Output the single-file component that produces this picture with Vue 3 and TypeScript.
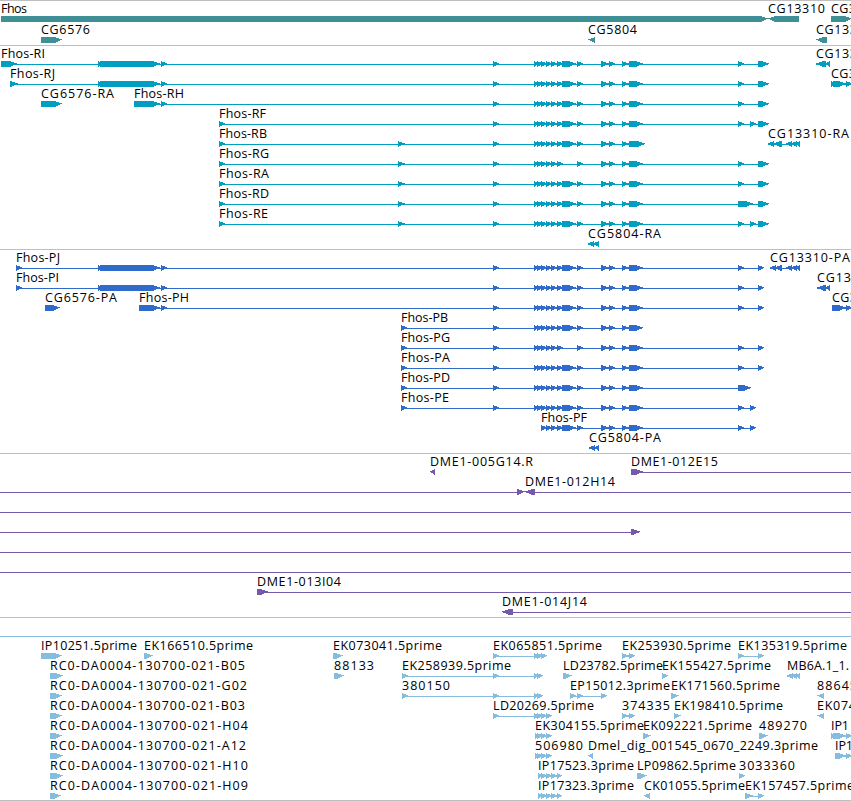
<template>
  <main class="browser">
    <section v-for="track in tracks" :key="track.name" class="track" :class="`track-${track.name}`">
      <svg
        v-for="(row, rowIndex) in track.rows"
        :key="rowIndex"
        class="track-row"
        :viewBox="`0 0 ${VIEW_WIDTH} ${track.rowHeight}`"
        :width="VIEW_WIDTH"
        :height="track.rowHeight"
      >
        <g v-for="(feature, featureIndex) in row" :key="featureIndex">
          <rect
            v-if="feature.line"
            class="feature-line"
            :x="feature.line[0]"
            :y="LINE_Y"
            :width="feature.line[1] - feature.line[0]"
            height="1"
          />
          <polygon
            v-for="(exon, exonIndex) in feature.exons"
            :key="exonIndex"
            class="feature-exon"
            :points="exonPoints(exon, feature.reverse)"
          />
          <text
            v-if="feature.label"
            class="feature-label"
            :x="feature.x"
            :y="BASELINE_Y"
            :textLength="feature.labelWidth"
          >{{ feature.label }}</text>
        </g>
      </svg>
    </section>
  </main>
</template>

<script setup lang="ts">
type Span = [number, number]

interface Feature {
  label: string
  x: number
  labelWidth: number
  exons: Span[]
  line: Span | null
  reverse: boolean
}

interface Track {
  name: string
  rowHeight: number
  rows: Feature[][]
}

const VIEW_WIDTH = 851
const BASELINE_Y = 11
const EXON_TOP = 14
const EXON_BOTTOM = 20
const LINE_Y = 17
const HEAD_WIDTH = 7

function exonPoints([start, end]: Span, reverse: boolean): string {
  const head = Math.min(HEAD_WIDTH, end - start)
  const tip = reverse ? start : end
  const tail = reverse ? end : start
  const neck = reverse ? start + head : end - head
  return [
    [tail, EXON_TOP],
    [neck, EXON_TOP],
    [tip, 16.4],
    [tip, 16.7],
    [neck, EXON_BOTTOM],
    [tail, EXON_BOTTOM],
  ].map((point) => point.join(',')).join(' ')
}

function feature(label: string, labelWidth: number, exons: Span[], reverse = false): Feature {
  const first = exons[0][0]
  const last = exons[exons.length - 1][1]
  return {
    label,
    x: first,
    labelWidth,
    exons,
    line: exons.length > 1 ? [first, last - 1] : null,
    reverse,
  }
}

function reversed(label: string, labelWidth: number, exons: Span[]): Feature {
  return feature(label, labelWidth, exons, true)
}

function clone(label: string, x: number, labelWidth: number, exons: Span[], line: Span | null, reverse = false): Feature {
  return { label, x, labelWidth, exons, line, reverse }
}

function plainLine(): Feature {
  return clone('', 0, 0, [], [0, VIEW_WIDTH])
}

// Exons shared by the Fhos isoforms
const upstream: Span[] = [[98, 104], [100, 160], [161, 167]]
const e493: Span = [493, 499]
const cluster: Span[] = [[534, 539], [537, 543]]
const cluster2: Span[] = [[541, 547], [546, 552], [551, 557], [557, 563]]
const wide: Span = [562, 576]
const tail: Span[] = [[577, 583], [601, 609], [609, 615], [622, 629]]
const e629: Span = [629, 643]
const e738: Span = [738, 744]
const e750: Span = [750, 756]
const e758: Span = [758, 769]
const codingEnd: Span = [758, 764]

const core: Span[] = [e493, ...cluster, ...cluster2, wide, ...tail, e629]
const coreWithoutWide: Span[] = [e493, ...cluster, ...cluster2, ...tail, e629]
const coreLong: Span[] = [e493, ...cluster, ...cluster2, wide, ...tail, [629, 645]]

const rStart: Span[] = [[219, 225], [398, 405]]
const pStart: Span = [401, 407]
const estCluster: Span[] = [[535, 540], [537, 543], [541, 547], [546, 552]]
const ipCluster: Span[] = [[538, 543], [541, 547], [546, 552], [551, 557], [557, 562]]

const tracks: Track[] = [
  {
    name: 'genes',
    rowHeight: 21,
    rows: [
      [
        feature('Fhos', 26, [[1, 768]]),
        reversed('CG13310', 57, [[768, 799]]),
        feature('CG3', 25, [[831, 852]]),
      ],
      [
        feature('CG6576', 49, [[41, 62]]),
        reversed('CG5804', 49, [[588, 595]]),
        reversed('CG133', 41, [[816, 827]]),
      ],
    ],
  },
  {
    name: 'transcripts',
    rowHeight: 20,
    rows: [
      [
        feature('Fhos-RI', 44, [[1, 17], ...upstream, ...core, e738, e758]),
        reversed('CG133', 41, [[816, 826], [825, 830]]),
      ],
      [
        feature('Fhos-RJ', 45, [[10, 18], ...upstream, ...core, e738, e758]),
        feature('CG3', 25, [[831, 835], [833, 846], [846, 852]]),
      ],
      [
        feature('CG6576-RA', 73, [[41, 62]]),
        feature('Fhos-RH', 50, [[134, 160], [161, 167], ...core, e738, e758]),
      ],
      [feature('Fhos-RF', 47, [[219, 225], ...core, e738, e750, e758])],
      [
        feature('Fhos-RB', 48, [...rStart, ...coreLong]),
        reversed('CG13310-RA', 81, [[768, 774], [773, 782], [786, 792], [791, 797], [795, 800]]),
      ],
      [feature('Fhos-RG', 50, [...rStart, ...coreWithoutWide, e738, e758])],
      [feature('Fhos-RA', 50, [...rStart, ...core, e738, e758])],
      [feature('Fhos-RD', 50, [...rStart, ...core, [738, 753], e758])],
      [feature('Fhos-RE', 49, [...rStart, ...core, e738, e750, e758])],
      [reversed('CG5804-RA', 73, [[588, 594], [593, 599]])],
    ],
  },
  {
    name: 'proteins',
    rowHeight: 20,
    rows: [
      [
        feature('Fhos-PJ', 44, [[16, 22], ...upstream, ...core, e738, codingEnd]),
        reversed('CG13310-PA', 80, [[770, 776], [774, 782], [786, 792], [791, 797], [795, 800]]),
      ],
      [
        feature('Fhos-PI', 43, [[16, 22], ...upstream, ...core, e738, codingEnd]),
        reversed('CG133', 42, [[817, 826], [825, 830]]),
      ],
      [
        feature('CG6576-PA', 72, [[45, 60]]),
        feature('Fhos-PH', 50, [[139, 160], [161, 167], ...core, e738, codingEnd]),
        feature('CG3', 25, [[832, 846], [846, 852]]),
      ],
      [feature('Fhos-PB', 47, [pStart, ...core])],
      [feature('Fhos-PG', 49, [pStart, ...coreWithoutWide, e738, codingEnd])],
      [feature('Fhos-PA', 49, [pStart, ...core, e738, codingEnd])],
      [feature('Fhos-PD', 49, [pStart, ...core, [738, 751]])],
      [feature('Fhos-PE', 48, [pStart, ...core, e738, e750])],
      [feature('Fhos-PF', 46, [...cluster2, wide, ...tail, e629, e738, e750])],
      [reversed('CG5804-PA', 72, [[589, 595], [594, 599]])],
    ],
  },
  {
    name: 'clones',
    rowHeight: 20,
    rows: [
      [
        clone('DME1-005G14.R', 430, 103, [[430, 435]], null, true),
        clone('DME1-012E15', 631, 87, [[631, 643]], [631, VIEW_WIDTH]),
      ],
      [
        clone('', 0, 0, [[517, 525]], [0, 523]),
        clone('DME1-012H14', 525, 90, [[525, 535]], [526, VIEW_WIDTH], true),
      ],
      [plainLine()],
      [clone('', 0, 0, [[631, 640]], [0, 639])],
      [plainLine()],
      [plainLine()],
      [clone('DME1-013I04', 257, 84, [[257, 268]], [257, VIEW_WIDTH])],
      [clone('DME1-014J14', 502, 85, [[502, 513]], [503, VIEW_WIDTH], true)],
    ],
  },
  {
    name: 'ests',
    rowHeight: 20,
    rows: [
      [plainLine()],
      [
        feature('IP10251.5prime', 96, [[41, 62]]),
        feature('EK166510.5prime', 109, [[144, 153]]),
        feature('EK073041.5prime', 109, [[333, 343]]),
        feature('EK065851.5prime', 109, [[493, 499], [534, 540], [537, 543], [541, 547]]),
        feature('EK253930.5prime', 109, [[622, 629], [629, 635]]),
        feature('EK135319.5prime', 109, [e738, codingEnd]),
      ],
      [
        feature('RC0-DA0004-130700-021-B05', 195, [[50, 63]]),
        feature('88133', 40, [[334, 344]]),
        feature('EK258939.5prime', 109, [[402, 408], e493, ...cluster]),
        feature('LD23782.5prime', 100, [[563, 572]]),
        feature('EK155427.5prime', 109, [[662, 668]]),
        reversed('MB6A.1_1.', 62, [[787, 793], [791, 797], [795, 800]]),
      ],
      [
        feature('RC0-DA0004-130700-021-G02', 197, [[50, 62]]),
        feature('380150', 48, [[402, 408], e493, ...cluster]),
        feature('EP15012.3prime', 100, [[570, 576], [577, 583], [601, 607]]),
        feature('EK171560.5prime', 109, [[671, 679]]),
        reversed('88645', 40, [[817, 824]]),
      ],
      [
        feature('RC0-DA0004-130700-021-B03', 195, [[50, 62]]),
        feature('LD20269.5prime', 101, [e493, [534, 540], ...estCluster.slice(1)]),
        feature('374335', 48, [[622, 629], [629, 635]]),
        feature('EK198410.5prime', 109, [[674, 681]]),
        reversed('EK074', 39, [[817, 824]]),
      ],
      [
        feature('RC0-DA0004-130700-021-H04', 198, [[50, 62]]),
        feature('EK304155.5prime', 109, estCluster),
        feature('EK092221.5prime', 109, [[643, 651]]),
        feature('489270', 48, [[759, 768]]),
        feature('IP1', 18, [[831, 835], [833, 846], [846, 852]]),
      ],
      [
        feature('RC0-DA0004-130700-021-A12', 196, [[50, 63]]),
        feature('506980', 48, estCluster),
        reversed('Dmel_dig_001545_0670_2249.3prime', 230, [[588, 593]]),
        feature('IP1', 18, [[835, 846], [846, 852]]),
      ],
      [
        feature('RC0-DA0004-130700-021-H10', 198, [[50, 63]]),
        feature('IP17523.3prime', 96, ipCluster),
        feature('LP09862.5prime', 99, [[637, 647]]),
        feature('3033360', 56, [[739, 745]]),
      ],
      [
        feature('RC0-DA0004-130700-021-H09', 198, [[50, 61]]),
        feature('IP17323.3prime', 96, ipCluster),
        reversed('CK01055.5prime', 101, [[644, 650]]),
        feature('EK157457.5prime', 109, [[745, 753], codingEnd]),
      ],
    ],
  },
]
</script>

<style>
body {
  background: #fff;
}
</style>

<style scoped>
.browser {
  box-sizing: border-box;
  width: 851px;
  height: 801px;
  overflow: hidden;
  background: #fff;
  border-bottom: 1px solid #bfbfbf;
}

.track {
  display: flex;
  flex-direction: column;
  padding: 1px 0 2px;
  border-top: 1px solid #bfbfbf;
}

.track-row {
  display: block;
  flex: none;
  overflow: visible;
}

.track-genes {
  padding-bottom: 1px;
  color: #3e9096;
}

.track-transcripts {
  color: #009fc1;
}

.track-proteins {
  color: #2f6bcb;
}

.track-clones {
  color: #7759a9;
}

.track-ests {
  padding-bottom: 1px;
  color: #86bcdd;
}

.feature-line,
.feature-exon {
  fill: currentColor;
  shape-rendering: crispEdges;
}

.feature-label {
  fill: #000;
  font-family: "Open Sans", "DejaVu Sans", sans-serif;
  font-size: 12.5px;
}
</style>
